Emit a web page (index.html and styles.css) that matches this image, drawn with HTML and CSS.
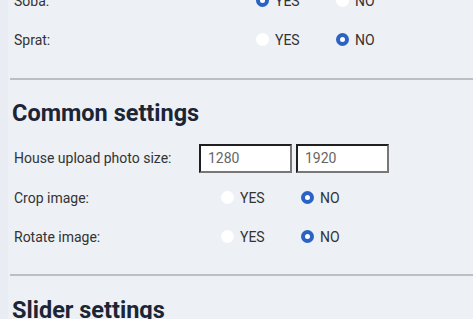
FILE: index.html
```html
<!DOCTYPE html>
<html lang="en">
<head>
    <meta charset="UTF-8">
    <meta name="viewport" content="width=device-width, initial-scale=1.0">
    <title>Settings</title>
    <link rel="stylesheet" href="styles.css">
</head>
<body>
    <main class="settings">
        <section class="group group-food">
            <div class="row">
                <span class="label">Soba:</span>
                <label class="option"><input type="radio" name="soba" checked> YES</label>
                <label class="option"><input type="radio" name="soba"> NO</label>
            </div>
            <div class="row">
                <span class="label">Sprat:</span>
                <label class="option"><input type="radio" name="sprat"> YES</label>
                <label class="option"><input type="radio" name="sprat" checked> NO</label>
            </div>
        </section>

        <hr class="divider divider-top">

        <section class="group group-common">
            <h2>Common settings</h2>
            <div class="row row-input">
                <span class="label label-input">House upload photo size:</span>
                <input class="size" type="text" value="1280">
                <input class="size" type="text" value="1920">
            </div>
            <div class="row">
                <span class="label">Crop image:</span>
                <label class="option"><input type="radio" name="crop"> YES</label>
                <label class="option"><input type="radio" name="crop" checked> NO</label>
            </div>
            <div class="row">
                <span class="label">Rotate image:</span>
                <label class="option"><input type="radio" name="rotate"> YES</label>
                <label class="option"><input type="radio" name="rotate" checked> NO</label>
            </div>
        </section>

        <hr class="divider">

        <section class="group">
            <h2 class="heading-slider">Slider settings</h2>
        </section>
    </main>
</body>
</html>
```

FILE: styles.css
```css
* {
    box-sizing: border-box;
    margin: 0;
    padding: 0;
}

body {
    font-family: Roboto, 'Liberation Sans', Arial, sans-serif;
    font-size: 14px;
    background-color: #e9ecf2;
    color: #333;
    overflow: hidden;
}

.settings {
    margin: -19px 0 0 8px;
    padding-left: 6px;
    background-color: #edf0f4;
    min-height: 400px;
}

.row {
    display: flex;
    align-items: center;
    height: 39px;
}

.label {
    width: 242px;
    flex-shrink: 0;
}

.group-common .label {
    width: 207px;
}

.group-common .label-input {
    width: 181px;
}

.row-input {
    height: 40px;
    gap: 4px;
    margin-top: 12px;
}

.option {
    display: flex;
    align-items: center;
    gap: 6px;
    width: 80px;
}

.option input {
    appearance: none;
    -webkit-appearance: none;
    width: 13px;
    height: 13px;
    border-radius: 50%;
    background-color: #fff;
    margin: 0;
}

.option input:checked {
    border: 4px solid #2b63c4;
}

.size {
    width: 93px;
    height: 29px;
    padding: 0 7px;
    border: 2px solid;
    border-color: #1f1f1f #777 #777 #1f1f1f;
    background-color: #fff;
    font-family: inherit;
    font-size: 14px;
    color: #666;
}

.divider {
    border: none;
    height: 2px;
    background-color: #bcbec2;
    margin: 18px 0 0 -4px;
}

.divider-top {
    margin-top: 19px;
}

h2 {
    font-size: 23.5px;
    line-height: 26px;
    font-weight: 700;
    color: #1c2536;
    margin: 20px 0 0 -2px;
}

.heading-slider {
    margin-top: 21px;
}
```
